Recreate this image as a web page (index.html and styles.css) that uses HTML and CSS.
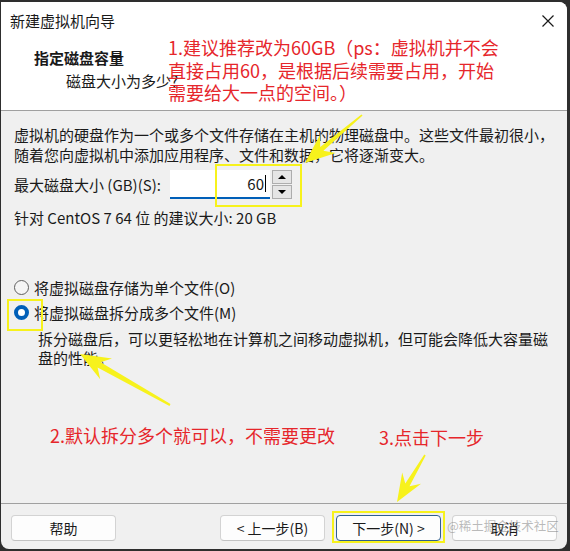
FILE: index.html
```html
<!DOCTYPE html>
<html lang="zh-CN">
<head>
    <meta charset="UTF-8">
    <title>新建虚拟机向导</title>
    <link rel="stylesheet" href="styles.css">
</head>
<body>

    <div class="window">
        <!-- Header -->
        <div class="header">
            <div class="titlebar">
                <span class="title">新建虚拟机向导</span>
                <svg class="close" width="12" height="12" viewBox="0 0 12 12">
                    <path d="M0.5 0.5 L11.5 11.5 M11.5 0.5 L0.5 11.5" stroke="#1a1a1a" stroke-width="1.2" fill="none"/>
                </svg>
            </div>
            <div class="heading-title">指定磁盘容量</div>
            <div class="heading-sub">磁盘大小为多少?</div>
        </div>

        <!-- Content -->
        <div class="content">
            <p class="intro">虚拟机的硬盘作为一个或多个文件存储在主机的物理磁盘中。这些文件最初很小，<br>随着您向虚拟机中添加应用程序、文件和数据，它将逐渐变大。</p>

            <div class="size-row">
                <label class="size-label">最大磁盘大小 (GB)(S):</label>
                <div class="text-box">60<span class="caret"></span></div>
                <div class="spinner">
                    <div class="spin-btn"><span class="tri-up"></span></div>
                    <div class="spin-btn"><span class="tri-down"></span></div>
                </div>
            </div>

            <p class="hint">针对 CentOS 7 64 位 的建议大小: 20 GB</p>

            <div class="radio-row first"><span class="radio"></span>将虚拟磁盘存储为单个文件(O)</div>
            <div class="radio-row"><span class="radio checked"></span>将虚拟磁盘拆分成多个文件(M)</div>
            <p class="radio-desc">拆分磁盘后，可以更轻松地在计算机之间移动虚拟机，但可能会降低大容量磁<br>盘的性能。</p>
        </div>

        <!-- Footer -->
        <div class="footer">
            <button class="btn">帮助</button>
            <div class="btn-group">
                <button class="btn">&lt; 上一步(B)</button>
                <button class="btn default">下一步(N) &gt;</button>
                <button class="btn">取消</button>
            </div>
        </div>
    </div>

    <!-- Annotations drawn over the screenshot -->
    <div class="overlay">
        <div class="note note-1">1.建议推荐改为60GB（ps：虚拟机并不会<br>直接占用60，是根据后续需要占用，开始<br>需要给大一点的空间。）</div>
        <div class="note note-2">2.默认拆分多个就可以，不需要更改</div>
        <div class="note note-3">3.点击下一步</div>

        <div class="mark mark-input"></div>
        <div class="mark mark-radio"></div>
        <div class="mark mark-next"></div>

        <svg class="arrows" width="570" height="551" viewBox="0 0 570 551">
            <polygon points="305,163 335.7,152.9 323.4,150.7 362.6,115.6 361.4,114.4 320.2,146.9 320.2,134.5" />
            <polygon points="80,354 112,358.4 100.6,362.2 170.5,404.1 169.5,405.9 97.6,367.4 100.2,379.2" />
            <polygon points="397,502 421,483.8 409.5,486.2 425.7,455.4 424.3,454.6 405.3,483.6 402.2,472.4" />
        </svg>

        <div class="watermark">@稀土掘金技术社区</div>
    </div>

</body>
</html>
```

FILE: styles.css
```css
body {
    margin: 0;
    width: 570px;
    height: 551px;
    position: relative;
    overflow: hidden;
    background: #2e2e2e;
    font-family: "Noto Sans CJK SC", "Microsoft YaHei", sans-serif;
    color: #1a1a1a;
}
.window {
    width: 566px;
    height: 547px;
    margin: 2px 0 0 1px;
    border-radius: 0 8px 8px 8px;
    overflow: hidden;
    background: #f0f0f0;
    display: flex;
    flex-direction: column;
}
.header {
    height: 108px;
    flex-shrink: 0;
    background: #fff;
    border-bottom: 1px solid #a0a0a0;
}
.titlebar {
    height: 37px;
    display: flex;
    align-items: center;
    justify-content: space-between;
    padding: 0 13px 0 9px;
}
.title {
    font-size: 15px;
    line-height: 20px;
}
.heading-title {
    margin-top: 8px;
    padding-left: 33px;
    font-size: 15px;
    font-weight: bold;
    line-height: 22px;
}
.heading-sub {
    margin-top: 1px;
    padding-left: 65px;
    font-size: 15px;
    line-height: 22px;
}
.content {
    flex: 1;
    padding: 14px 0 0 13px;
    font-size: 15px;
}
.intro {
    margin: 0;
    line-height: 19.5px;
}
.size-row {
    display: flex;
    align-items: center;
    margin-top: 6px;
    height: 29px;
}
.size-label {
    width: 156px;
    line-height: 20px;
}
.text-box {
    width: 100px;
    height: 29px;
    box-sizing: border-box;
    background: #fff;
    border-bottom: 2px solid #005fb8;
    display: flex;
    align-items: center;
    justify-content: flex-end;
    padding-right: 4px;
    line-height: 20px;
}
.caret {
    width: 1px;
    height: 17px;
    background: #000;
    margin-left: 1px;
}
.spinner {
    margin-left: 2px;
    width: 20px;
    height: 29px;
    display: flex;
    flex-direction: column;
    gap: 1px;
}
.spin-btn {
    flex: 1;
    box-sizing: border-box;
    border: 1px solid #adadad;
    background: #e5e5e5;
    display: flex;
    align-items: center;
    justify-content: center;
}
.tri-up, .tri-down {
    width: 0;
    height: 0;
    border-left: 4px solid transparent;
    border-right: 4px solid transparent;
}
.tri-up {
    border-bottom: 4px solid #000;
}
.tri-down {
    border-top: 4px solid #000;
}
.hint {
    margin: 9px 0 0;
    line-height: 20px;
}
.radio-row {
    height: 25px;
    display: flex;
    align-items: center;
    gap: 5px;
    line-height: 20px;
}
.radio-row.first {
    margin-top: 47px;
}
.radio {
    width: 15px;
    height: 15px;
    box-sizing: border-box;
    border-radius: 50%;
    border: 1px solid #5f5f5f;
    background: #f5f5f5;
}
.radio.checked {
    border: 4.5px solid #005fb8;
    background: #fff;
}
.radio-desc {
    margin: 4px 0 0 24px;
    line-height: 19px;
}
.footer {
    height: 46px;
    flex-shrink: 0;
    box-sizing: border-box;
    border-top: 1px solid #a0a0a0;
    padding: 11px 10px 0 10px;
    display: flex;
}
.btn-group {
    margin-left: auto;
    display: flex;
    gap: 11px;
}
.btn {
    width: 105px;
    height: 26px;
    padding: 0;
    font-family: inherit;
    font-size: 14px;
    color: #1a1a1a;
    background: #fdfdfd;
    border: 1px solid #d3d3d3;
    border-bottom-color: #c2c2c2;
    border-radius: 4px;
}
.btn.default {
    border-color: #2f5f8f;
}

/* annotations */
.overlay {
    position: absolute;
    left: 0;
    top: 0;
    width: 570px;
    height: 551px;
    pointer-events: none;
}
.note {
    position: absolute;
    font-size: 18px;
    line-height: 22.5px;
    color: #e6262b;
    white-space: nowrap;
}
.note-1 {
    left: 168px;
    top: 36px;
}
.note-2 {
    left: 50px;
    top: 424px;
}
.note-3 {
    left: 379px;
    top: 426px;
}
.mark {
    position: absolute;
    border: 2px solid #f7f21c;
    box-sizing: border-box;
}
.mark-input {
    left: 215px;
    top: 164px;
    width: 87px;
    height: 43px;
}
.mark-radio {
    left: 7px;
    top: 299px;
    width: 36px;
    height: 32px;
}
.mark-next {
    left: 332px;
    top: 511px;
    width: 113px;
    height: 32px;
}
.arrows {
    position: absolute;
    left: 0;
    top: 0;
}
.arrows polygon {
    fill: #f7f21c;
}
.watermark {
    position: absolute;
    left: 447px;
    top: 517px;
    font-size: 12.5px;
    line-height: 18px;
    color: rgba(120, 120, 120, 0.5);
}
```
